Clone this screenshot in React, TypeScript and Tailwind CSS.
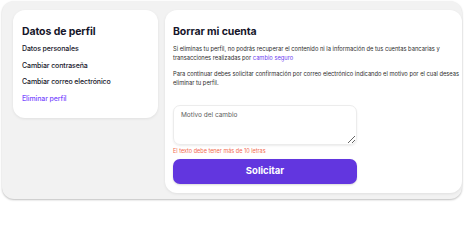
export default function App() {
  return (
    <div className="w-[464px] h-[205px] bg-white font-['Inter',sans-serif] text-[#16162a]">
      <div className="ml-[2px] mt-px w-[460px] h-[198px] bg-[#f2f2f2] rounded-xl shadow-[0_1px_2px_rgba(0,0,0,0.25)] flex gap-[7px] pl-[11px] pt-[9px]">
        <div className="w-[145px] h-[108px] bg-white rounded-xl shadow-[0_1px_3px_rgba(0,0,0,0.08)] pl-[9px] pt-[15px]">
          <h2 className="text-[10.5px] leading-[13px] font-bold tracking-[-0.1px]">Datos de perfil</h2>
          <ul className="mt-[6px] flex flex-col gap-[7px] text-[7px] leading-[9.5px] font-medium tracking-[-0.1px]">
            <li>Datos personales</li>
            <li>Cambiar contraseña</li>
            <li>Cambiar correo electrónico</li>
            <li className="text-[#7a4dff]">Eliminar perfil</li>
          </ul>
        </div>
        <div className="w-[297px] h-[183px] bg-white rounded-xl shadow-[0_1px_3px_rgba(0,0,0,0.08)] pl-[8px] pt-[15px]">
          <h2 className="text-[10.5px] leading-[13px] font-bold tracking-[-0.1px]">Borrar mi cuenta</h2>
          <p className="mt-[6px] text-[5.75px] leading-[9px] text-[#2a2a2a] pr-[2px]">
            Si eliminas tu perfil, no podrás recuperar el contenido ni la información de tus cuentas bancarias y transacciones realizadas por <span className="text-[#6a3cf0]">cambio seguro</span>
          </p>
          <p className="mt-[7px] text-[5.75px] leading-[9px] text-[#2a2a2a] pr-[2px]">
            Para continuar debes solicitar confirmación por correo electrónico indicando el motivo por el cual deseas eliminar tu perfil.
          </p>
          <div className="w-[184px] mt-[18px]">
            <textarea
              placeholder="Motivo del cambio"
              className="block w-full h-[40px] rounded-[7px] border border-[#ececec] shadow-[0_1px_2px_rgba(0,0,0,0.08)] px-[7px] py-[5px] text-[6.5px] leading-[9px] placeholder:text-[#5e5e5e] outline-none"
            />
            <p className="mt-[3px] text-[5.5px] leading-[7px] text-[#f26b4f]">El texto debe tener más de 10 letras</p>
            <button className="mt-[4px] w-full h-[25px] rounded-[7px] bg-[#6236df] text-white text-[9.5px] font-bold shadow-[0_1px_2px_rgba(0,0,0,0.15)]">
              Solicitar
            </button>
          </div>
        </div>
      </div>
    </div>
  );
}
